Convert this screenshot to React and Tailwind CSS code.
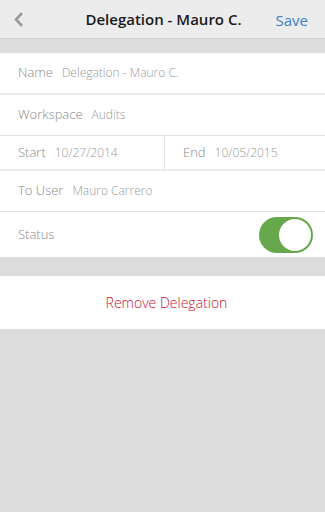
import React from 'react';

const Row = ({ label, value, className = '' }) => (
  <div className={`flex items-center pl-[18px] bg-white ${className}`}>
    <span className="text-[13px] text-[#8a8a8a] font-light">{label}</span>
    {value && <span className="ml-[9px] text-[12px] text-[#9a9a9a] font-light">{value}</span>}
  </div>
);

const App = () => {
  return (
    <div className="w-[325px] h-[512px] bg-[#dcdcdc] overflow-hidden" style={{ fontFamily: '"Open Sans", sans-serif' }}>
      {/* header */}
      <div className="h-[39px] bg-[#ececec] border-b border-[#d4d4d4] flex items-center relative">
        <svg className="absolute left-[12px] top-[11px]" width="14" height="17" viewBox="0 0 14 17">
          <path d="M10 2 L4 8.5 L10 15" fill="none" stroke="#9a9a9a" strokeWidth="2.6" />
        </svg>
        <div className="flex-1 text-center text-[15px] font-semibold text-[#1a1a1a] pl-[2px]">Delegation - Mauro C.</div>
        <span className="absolute right-[17px] top-[9px] text-[15px] text-[#3b82c4]">Save</span>
      </div>

      <div className="mt-[14px] flex flex-col">
        <Row label="Name" value="Delegation - Mauro C." className="h-[42px] border-b-2 border-[#ebebeb]" />
        <Row label="Workspace" value="Audits" className="h-[41px] border-b border-[#e2e2e2]" />
        <div className="h-[35px] flex bg-white border-b-2 border-[#ebebeb]">
          <div className="w-[165px] flex items-center pl-[18px] border-r border-[#e2e2e2]">
            <span className="text-[13px] text-[#8a8a8a] font-light">Start</span>
            <span className="ml-[9px] text-[12px] text-[#9a9a9a] font-light">10/27/2014</span>
          </div>
          <div className="flex items-center pl-[18px]">
            <span className="text-[13px] text-[#8a8a8a] font-light">End</span>
            <span className="ml-[9px] text-[12px] text-[#9a9a9a] font-light">10/05/2015</span>
          </div>
        </div>
        <Row label="To User" value="Mauro Carrero" className="h-[41px] border-b border-[#e2e2e2]" />
        <div className="h-[45px] bg-white flex items-center justify-between pl-[18px] pr-[12px]">
          <span className="text-[13px] text-[#8a8a8a] font-light">Status</span>
          <div className="w-[54px] h-[36px] rounded-full bg-[#68a84c] flex items-center justify-end pr-[2px]">
            <div className="w-[32px] h-[32px] rounded-full bg-white" />
          </div>
        </div>
      </div>

      <div className="mt-[19px] h-[53px] bg-white flex items-center justify-center">
        <span className="text-[14px] text-[#c8102e] font-light pl-[8px]">Remove Delegation</span>
      </div>
    </div>
  );
};

export default App;
